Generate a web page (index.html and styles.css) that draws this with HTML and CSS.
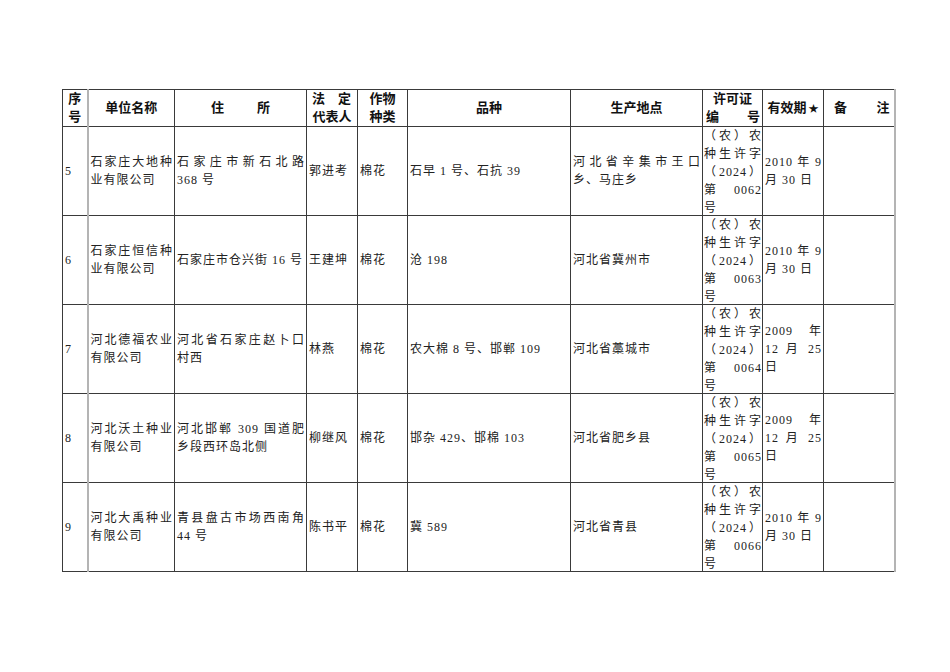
FILE: index.html
```html
<!DOCTYPE html>
<html lang="zh-CN">
<head>
<meta charset="utf-8">
<title>农作物种子生产许可证</title>
<link rel="stylesheet" href="styles.css">
</head>
<body>
<table class="grid">
<colgroup>
<col class="c-no"><col class="c-name"><col class="c-addr"><col class="c-rep"><col class="c-crop"><col class="c-var"><col class="c-place"><col class="c-lic"><col class="c-date"><col class="c-note">
</colgroup>
<thead>
<tr class="head">
<th class="no-h"><span class="ln">序</span><span class="ln">号</span></th>
<th>单位名称</th>
<th><span class="spread w-addr"><span>住</span><span>所</span></span></th>
<th><span class="spread p-rep"><span>法</span><span>定</span></span><span class="ln">代表人</span></th>
<th><span class="ln">作物</span><span class="ln">种类</span></th>
<th>品种</th>
<th>生产地点</th>
<th><span class="ln">许可证</span><span class="spread p-lic"><span>编</span><span>号</span></span></th>
<th>有效期<span class="star">★</span></th>
<th class="last"><span class="spread p-note"><span>备</span><span>注</span></span></th>
</tr>
</thead>
<tbody>
<tr class="row">
<td class="no">5</td>
<td><span class="ln j">石家庄大地种</span><span class="ln">业有限公司</span></td>
<td><span class="ln j">石家庄市新石北路</span><span class="ln">368 号</span></td>
<td>郭进考</td>
<td>棉花</td>
<td>石早 1 号、石抗 39</td>
<td><span class="ln j">河北省辛集市王口</span><span class="ln">乡、马庄乡</span></td>
<td class="lic"><div class="lic-box"><span class="ln j">（农）农</span><span class="ln j">种生许字</span><span class="ln j">（2024）</span><span class="ln j">第 0062</span><span class="ln">号</span></div></td>
<td><span class="ln j">2010 年 9</span><span class="ln">月 30 日</span></td>
<td class="last"></td>
</tr>
<tr class="row">
<td class="no">6</td>
<td><span class="ln j">石家庄恒信种</span><span class="ln">业有限公司</span></td>
<td>石家庄市仓兴街 16 号</td>
<td>王建坤</td>
<td>棉花</td>
<td>沧 198</td>
<td>河北省冀州市</td>
<td class="lic"><div class="lic-box"><span class="ln j">（农）农</span><span class="ln j">种生许字</span><span class="ln j">（2024）</span><span class="ln j">第 0063</span><span class="ln">号</span></div></td>
<td><span class="ln j">2010 年 9</span><span class="ln">月 30 日</span></td>
<td class="last"></td>
</tr>
<tr class="row">
<td class="no">7</td>
<td><span class="ln j">河北德福农业</span><span class="ln">有限公司</span></td>
<td><span class="ln j">河北省石家庄赵卜口</span><span class="ln">村西</span></td>
<td>林燕</td>
<td>棉花</td>
<td>农大棉 8 号、邯郸 109</td>
<td>河北省藁城市</td>
<td class="lic"><div class="lic-box"><span class="ln j">（农）农</span><span class="ln j">种生许字</span><span class="ln j">（2024）</span><span class="ln j">第 0064</span><span class="ln">号</span></div></td>
<td><span class="ln j">2009 年</span><span class="ln j">12 月 25</span><span class="ln">日</span></td>
<td class="last"></td>
</tr>
<tr class="row">
<td class="no">8</td>
<td><span class="ln j">河北沃土种业</span><span class="ln">有限公司</span></td>
<td><span class="ln j">河北邯郸 309 国道肥</span><span class="ln">乡段西环岛北侧</span></td>
<td>柳继风</td>
<td>棉花</td>
<td>邯杂 429、邯棉 103</td>
<td>河北省肥乡县</td>
<td class="lic"><div class="lic-box"><span class="ln j">（农）农</span><span class="ln j">种生许字</span><span class="ln j">（2024）</span><span class="ln j">第 0065</span><span class="ln">号</span></div></td>
<td><span class="ln j">2009 年</span><span class="ln j">12 月 25</span><span class="ln">日</span></td>
<td class="last"></td>
</tr>
<tr class="row">
<td class="no">9</td>
<td><span class="ln j">河北大禹种业</span><span class="ln">有限公司</span></td>
<td><span class="ln j">青县盘古市场西南角</span><span class="ln">44 号</span></td>
<td>陈书平</td>
<td>棉花</td>
<td>冀 589</td>
<td>河北省青县</td>
<td class="lic"><div class="lic-box"><span class="ln j">（农）农</span><span class="ln j">种生许字</span><span class="ln j">（2024）</span><span class="ln j">第 0066</span><span class="ln">号</span></div></td>
<td><span class="ln j">2010 年 9</span><span class="ln">月 30 日</span></td>
<td class="last"></td>
</tr>
</tbody>
</table>
</body>
</html>
```

FILE: styles.css
```css
html, body {
  margin: 0;
  padding: 0;
  background: #ffffff;
}

body {
  font-family: "Liberation Serif", "Noto Sans CJK SC", serif;
  color: #222222;
}

.grid {
  margin: 89px 0 0 62px;
  width: 832px;
  table-layout: fixed;
  border-collapse: collapse;
}

.c-no { width: 25px; }
.c-name { width: 87px; }
.c-addr { width: 132px; }
.c-rep { width: 51px; }
.c-crop { width: 50px; }
.c-var { width: 163px; }
.c-place { width: 132px; }
.c-lic { width: 60px; }
.c-date { width: 61px; }
.c-note { width: 71px; }

.grid th,
.grid td {
  border: 1px solid #3a3a3a;
  vertical-align: middle;
  overflow: visible;
}

.grid th:first-child,
.grid td:first-child {
  border-right: 2px solid #b4b4b4;
}

.grid .last {
  border-right: 2px solid #b4b4b4;
}

.head {
  height: 36px;
}

.grid th {
  font-family: "Liberation Sans", "Noto Sans CJK SC", sans-serif;
  font-size: 13px;
  font-weight: 700;
  line-height: 18px;
  color: #111111;
  text-align: center;
  padding: 0;
}

.row {
  height: 89px;
}

.grid td {
  font-size: 12px;
  letter-spacing: 1px;
  line-height: 18px;
  text-align: left;
  padding: 0 1px 0 2px;
}

.ln {
  display: block;
}

.j {
  text-align: justify;
  text-align-last: justify;
}

.spread {
  display: flex;
  justify-content: space-between;
}

.w-addr {
  width: 59px;
  margin: 0 auto;
}

.p-rep {
  padding: 0 6px 0 5px;
}

.p-lic {
  padding: 0 2px 0 3px;
}

.p-note {
  padding: 0 4px 0 10px;
}

.star {
  font-size: 10px;
  margin-left: 2px;
}

.grid td.lic {
  vertical-align: top;
  padding: 0 0 0 1px;
}

.lic-box {
  height: 88px;
  overflow: visible;
}
```
